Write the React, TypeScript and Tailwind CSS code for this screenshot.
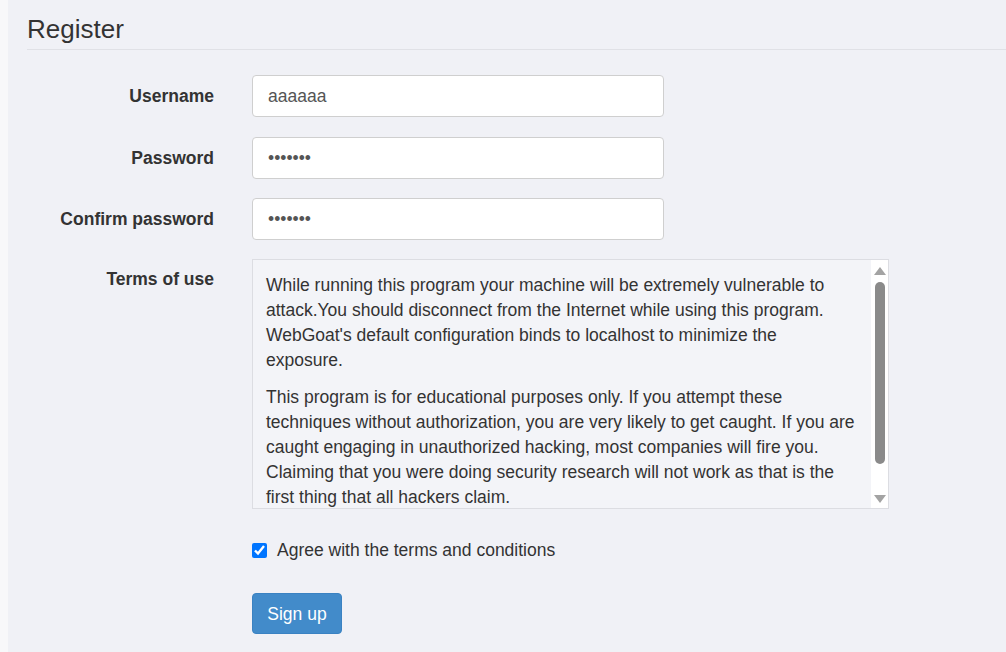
import React from "react";

const para1 = [
  "While running this program your machine will be extremely vulnerable to",
  "attack.You should disconnect from the Internet while using this program.",
  "WebGoat's default configuration binds to localhost to minimize the",
  "exposure.",
];
const para2 = [
  "This program is for educational purposes only. If you attempt these",
  "techniques without authorization, you are very likely to get caught. If you are",
  "caught engaging in unauthorized hacking, most companies will fire you.",
  "Claiming that you were doing security research will not work as that is the",
  "first thing that all hackers claim.",
];

function Field({ label, value, type }: { label: string; value: string; type: string }) {
  return (
    <div className="flex items-center">
      <div className="w-[187px] text-right font-bold text-[17.5px] leading-[20px] text-[#333]">{label}</div>
      <input
        type={type}
        defaultValue={value}
        className="ml-[38px] w-[412px] h-[42px] rounded-[4px] border border-[#cfcfcf] bg-white px-[15px] text-[17.5px] text-[#555] outline-none"
        style={{ fontFamily: '"Liberation Sans", Arial, sans-serif' }}
      />
    </div>
  );
}

export default function App() {
  return (
    <div
      className="flex min-h-[652px] w-full bg-[#f8f8fa] text-[#333]"
      style={{ fontFamily: '"Liberation Sans", Arial, sans-serif' }}
    >
      <div className="w-[8px] shrink-0" />
      <div className="flex-1 bg-[#f0f1f6] pl-[19px] pt-[15px]">
        <h2 className="text-[26px] leading-[29px] pb-[5px] border-b border-[#e0e1e6] text-[#333]">Register</h2>
        <div className="mt-[25px] flex flex-col">
          <Field label="Username" value="aaaaaa" type="text" />
          <div className="h-[20px]" />
          <Field label="Password" value="aaaaaaa" type="password" />
          <div className="h-[19px]" />
          <Field label="Confirm password" value="aaaaaaa" type="password" />
          <div className="h-[19px]" />
          <div className="flex items-start">
            <div className="w-[187px] pt-[10px] text-right font-bold text-[17.5px] leading-[20px] text-[#333]">
              Terms of use
            </div>
            <div className="ml-[38px] flex w-[637px] h-[250px] border border-[#dcdde2] bg-[#f3f4f8]">
              <div className="flex-1 overflow-hidden pl-[13px] pt-[13px] text-[17.5px] leading-[25px] text-[#333]">
                <p className="mb-[12px]">
                  {para1.map((l) => (
                    <span key={l} className="block whitespace-nowrap">{l}</span>
                  ))}
                </p>
                <p>
                  {para2.map((l) => (
                    <span key={l} className="block whitespace-nowrap">{l}</span>
                  ))}
                </p>
              </div>
              <div className="w-[17px] shrink-0 bg-white flex flex-col items-center">
                <svg width="12" height="8" viewBox="0 0 12 8" className="mt-[7px]">
                  <path d="M6 0 L12 8 L0 8 Z" fill="#a3a3a3" />
                </svg>
                <div className="mt-[7px] w-[10px] h-[182px] rounded-[5px] bg-[#8a8a8a]" />
                <div className="flex-1" />
                <svg width="12" height="8" viewBox="0 0 12 8" className="mb-[5px]">
                  <path d="M0 0 L12 0 L6 8 Z" fill="#a3a3a3" />
                </svg>
              </div>
            </div>
          </div>
          <div className="mt-[33px] ml-[225px] flex items-center h-[16px]">
            <input type="checkbox" defaultChecked className="w-[15px] h-[15px] m-0 ml-[0px] accent-[#0075ff]" />
            <span className="ml-[10px] text-[17.5px] leading-[20px] text-[#333]">Agree with the terms and conditions</span>
          </div>
          <div className="mt-[35px] ml-[225px]">
            <button className="h-[41px] w-[90px] rounded-[4px] border border-[#3a82c2] bg-[#428bca] text-white text-[17.5px] leading-[24px]">
              Sign up
            </button>
          </div>
        </div>
      </div>
    </div>
  );
}
